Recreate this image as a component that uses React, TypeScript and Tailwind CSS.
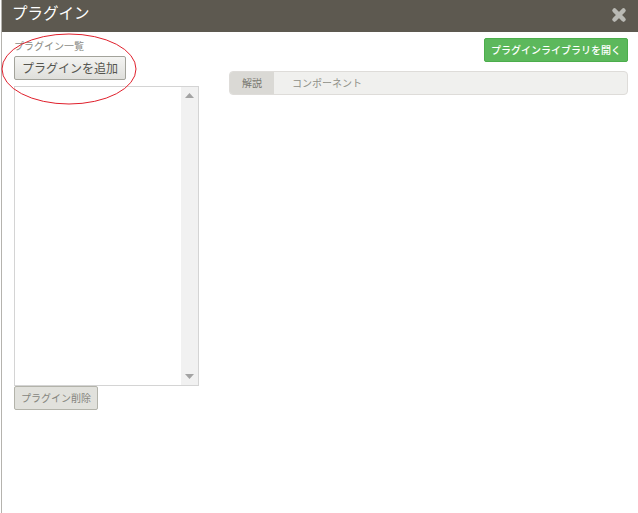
import { X } from "lucide-react";

const font = { fontFamily: '"Noto Sans CJK JP", "Liberation Sans", sans-serif' };

function ScrollArrow({ down }: { down?: boolean }) {
  return (
    <svg width="9" height="5" viewBox="0 0 9 5" className="block">
      <polygon points={down ? "0,0 9,0 4.5,5" : "0,5 9,5 4.5,0"} fill="#a3a3a3" />
    </svg>
  );
}

export default function App() {
  return (
    <div style={font} className="relative h-[513px] w-[638px] overflow-hidden bg-white">
      <div className="ml-px flex h-full border-l border-[#b5b3ae]">
        <div className="flex min-w-0 flex-1 flex-col">
          <header className="flex h-[32px] shrink-0 items-center justify-between bg-[#5d5950] pb-[6px] pl-[10px] pr-[10px]">
            <h1 className="text-[15.5px] leading-none text-white">プラグイン</h1>
            <X size={18} strokeWidth={6} className="mt-[3px] text-[#b9b9b4]" />
          </header>

          <div className="flex flex-1 pl-[12px] pr-[10px]">
            <div className="flex w-[185px] shrink-0 flex-col">
              <div className="mt-[7px] h-[14px] text-[10px] leading-[14px] text-[#8a8a84]">プラグイン一覧</div>
              <button className="mt-[3px] h-[24px] w-[112px] rounded-[2px] border border-[#a3a39b] bg-gradient-to-b from-[#f4f4f2] to-[#dfdfdb] text-[12px] leading-none text-[#55554f]">
                プラグインを追加
              </button>
              <div className="mt-[6px] flex h-[300px] border border-[#d4d4d4] bg-white">
                <div className="flex-1" />
                <div className="flex w-[17px] flex-col items-center justify-between bg-[#f1f1f1] py-[6px]">
                  <ScrollArrow />
                  <ScrollArrow down />
                </div>
              </div>
              <button className="h-[24px] w-[84px] rounded-[2px] border border-[#b3b3aa] bg-[#e1e1dc] text-[10px] leading-none text-[#85857e]">
                プラグイン削除
              </button>
            </div>

            <div className="ml-[30px] flex flex-1 flex-col">
              <div className="mt-[6px] flex justify-end">
                <button className="h-[24px] w-[144px] rounded-[2px] border border-[#4cae4c] bg-[#5cb85c] text-[10px] font-medium leading-none text-white">
                  プラグインライブラリを開く
                </button>
              </div>
              <div className="mt-[9px] flex h-[24px] overflow-hidden rounded-[4px] border border-[#dedcd9] bg-[#f0f0ee] text-[10px] leading-none">
                <div className="flex w-[44px] items-center justify-center bg-[#dad9d5] text-[#77776f]">解説</div>
                <div className="flex items-center pl-[18px] text-[#8f8f87]">コンポーネント</div>
              </div>
            </div>
          </div>
        </div>
      </div>

      <svg width="638" height="513" className="pointer-events-none absolute left-0 top-0">
        <ellipse cx="69" cy="69" rx="67" ry="35" fill="none" stroke="#e0202c" strokeWidth="1" />
      </svg>
    </div>
  );
}
